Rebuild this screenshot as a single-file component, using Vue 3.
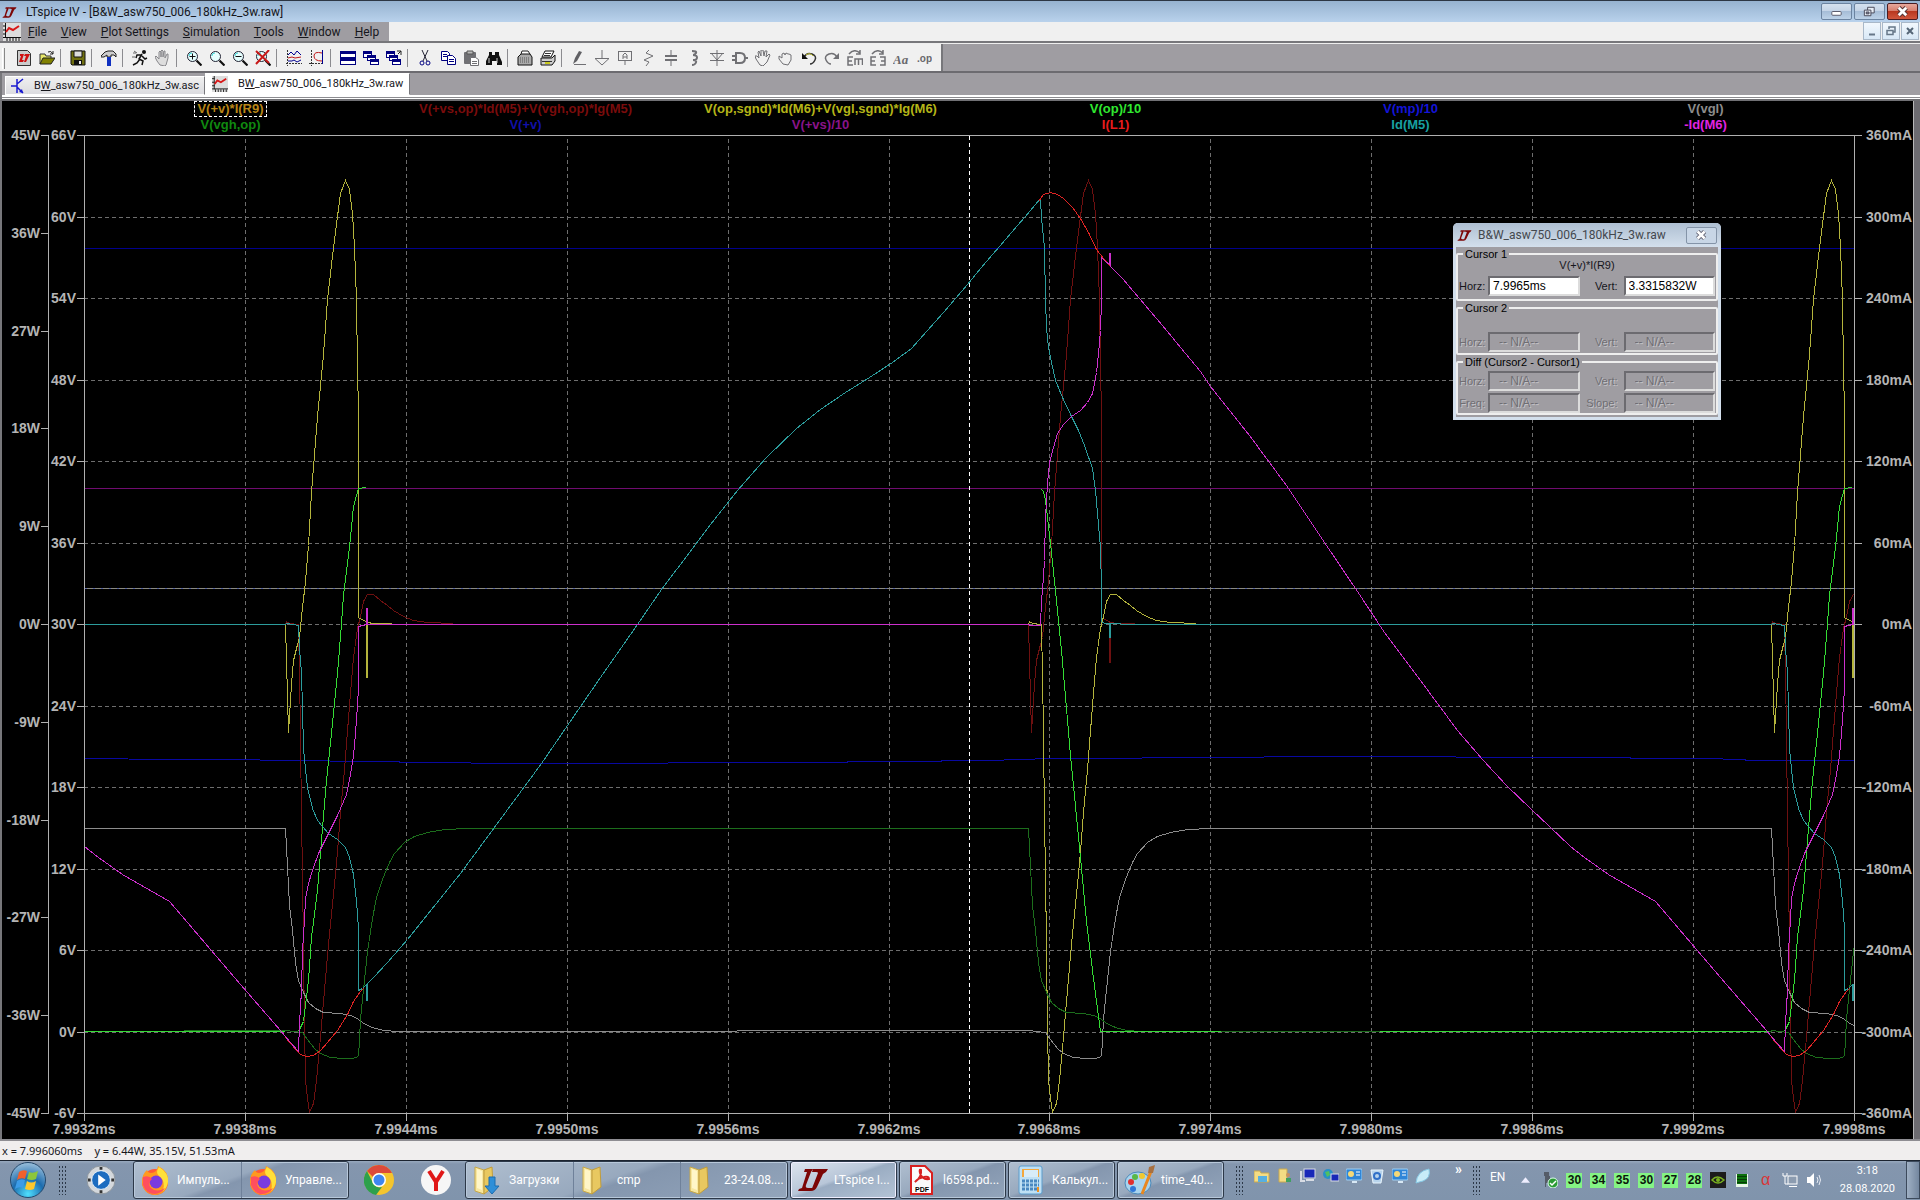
<script setup>
const menus = ['File', 'View', 'Plot Settings', 'Simulation', 'Tools', 'Window', 'Help']

const lens = '<circle cx="6.500" cy="6.500" r="5" fill="#e6ffff" stroke="#223" /><path d="M3 6a3 3 0 0 1 3-3" stroke="#4dd" fill="none"/><path d="M10.500 10.500l5 5" stroke="#111" stroke-width="2.200"/>'
const navy = 'stroke="#000080" fill="none"'
const grey = 'stroke="#707074" fill="none"'
const pane = (x, y, w, h) => `<rect x="${x}.500" y="${y}.500" width="${w}" height="${h}" fill="#fff" stroke="#000080"/><path d="M${x} ${y + 2}h${w + 1}" stroke="#000080" stroke-width="2"/>`
const handShape = 'M5 15l-3-4-2-4 1-1 3 3V2l1-1 1 1v5V1l1-1 1 1v6l1-6 1 0v7l2-4 1 0 0 4-2 7-1 1z'

const toolbar = [
  [
    ['New schematic', '<path d="M1.500.500h10l3 3v12h-13z" fill="#ccc" stroke="#333"/><path d="M4 4h4l-2 6h2l-1 2H3l2-6H4zM9 4h5l-4 8H8l2-6H8z" fill="#d01010"/>'],
    ['Open', '<path d="M1 14V4h5l1 2h5v3" fill="#e8e86a" stroke="#333"/><path d="M1 14l3-6h12l-4 6z" fill="#808000" stroke="#222"/><path d="M9 2q3-2 5 2m0-3v3h-3" stroke="#222" fill="none"/>']
  ],
  [['Save', '<path d="M1 1h14v14H2l-1-1z" fill="#707010" stroke="#111"/><path d="M4 1h8v6H4z" fill="#ddd" stroke="#111"/><path d="M4 10h8v5H4z" fill="#111"/><path d="M9 11h2v3H9z" fill="#eee"/>']],
  [['Control panel', '<path d="M0 6l4-4 3-1h5l3 3v3l-2-2h-3v2H6V5L3 7H0z" fill="#ccc" stroke="#222"/><path d="M6 7h4v9H6z" fill="#1030c0"/>']],
  [
    ['Run', '<circle cx="12" cy="2" r="2" fill="#111"/><path d="M10 4L7 9l4 2-1 4M8 9l-3 4-4 2M9 5L5 5 4 8M10 6l3 3 2-1" stroke="#111" stroke-width="1.500" fill="none"/><path d="M1 3h3M2 1l3 2M0 7h3" stroke="#666"/>'],
    ['Halt', `<path d="${handShape}" fill="#ddd" stroke="#88888c"/>`]
  ],
  [
    ['Zoom in', lens + '<path d="M6.500 3.500v6M3.500 6.500h6" stroke="#111"/>'],
    ['Pan', lens],
    ['Zoom out', lens + '<path d="M3.500 6.500h6" stroke="#111"/>'],
    ['Zoom extents', lens + '<path d="M1 1l13 12M14 0L1 14" stroke="#c81818" stroke-width="2"/>']
  ],
  [
    ['Autorange', '<path d="M1.500 0v16M0 13.500h16" stroke="#333" stroke-dasharray="2 1"/><path d="M2 5l3-3 3 3 3-4 4 4M2 11h4l2-1 3 2 4-2" stroke="#000090" fill="none"/><path d="M2 8l4-1 3 1 6-1" stroke="#c01818" fill="none"/>'],
    ['Pick traces', '<path d="M2.500 0v16M0 13.500h15" stroke="#333" stroke-dasharray="2 1"/><path d="M13.500 0v14" stroke="#000090"/><path d="M13 3Q5 1 5 6t8 5" stroke="#c01818" fill="none"/>']
  ],
  [
    ['Tile', pane(0, 1, 15, 6) + pane(0, 8, 15, 6)],
    ['Cascade', pane(0, 1, 8, 6) + pane(4, 5, 8, 5) + pane(7, 9, 8, 5)],
    ['Close all', pane(0, 1, 8, 6) + pane(3, 5, 8, 5) + pane(6, 9, 8, 5) + '<path d="M11 1h4v4M15 1l-3 3" stroke="#222" fill="none"/>']
  ],
  [
    ['Cut', `<path d="M5 0l5 11M11 0L6 11" stroke="#223"/><g ${navy}><circle cx="5" cy="13" r="2"/><circle cx="11" cy="13" r="2"/></g>`],
    ['Copy', `<g stroke="#000080" fill="#fff"><path d="M1.500 1.500h6l2 2v7h-8z"/><path d="M7.500 5.500h5l3 3v6h-8z"/></g><path d="M3 4.500h4M3 6.500h4M9 9.500h5M9 11.500h5" ${navy}/>`],
    ['Paste', '<rect x="1" y="2" width="12" height="12" rx="1" fill="#707074"/><path d="M4 1h6v3H4z" fill="#bbb" stroke="#555"/><path d="M7.500 7.500h5l3 2v6h-8z" fill="#fff" stroke="#707074"/><path d="M9 11.500h5M9 13.500h5" stroke="#707074"/>'],
    ['Find', '<path d="M3 2h3v3h3V2h4v3l3 7v3h-5v-4H6v4H0v-4l3-6z" fill="#111"/><path d="M3 8v5M11 8v5" stroke="#ccc"/>']
  ],
  [
    ['Print setup', '<path d="M4 4l1-3h6l2 3" fill="#fff" stroke="#222"/><path d="M1 7l3-3h9l2 3v8H1z" fill="#aaa" stroke="#111"/><path d="M3 8h10M3 10h10M3 12h10" stroke="#555" stroke-dasharray="1 1"/>'],
    ['Print', '<path d="M5 1h9l-3 6H2z" fill="#fff" stroke="#111"/><path d="M1 8h11l3-3v6l-3 4H1z" fill="#ccc" stroke="#111"/><path d="M5 3.500h6M4 5.500h6M2 11.500h10" stroke="#333"/><path d="M5 13h5" stroke="#c8c820" stroke-width="2"/>']
  ],
  [
    ['Wire', `<path d="M2 14l2-6 4-7 3 1-5 9z" fill="#606064"/><path d="M3 14.500h12" ${grey}/>`],
    ['Ground', `<path d="M8 0v8M1 8.500h14L8 15z" ${grey}/>`],
    ['Label net', `<rect x="1.500" y="1.500" width="13" height="9" ${grey}/><path d="M6 9V5l2-2 2 2v4M6 7h4M8 11v4" ${grey}/>`],
    ['Resistor', `<path d="M9 0L6 3l7 3-9 4 5 2-3 4" ${grey}/>`],
    ['Capacitor', `<path d="M8 0v6M8 10v6" ${grey}/><path d="M2 6h12M2 10h12" ${grey} stroke-width="2"/>`],
    ['Inductor', `<path d="M6 1q5 0 4 2t-3 2q4 0 4 2.500T7 10q4 0 3 2.500T6 15" ${grey} stroke-width="2"/>`],
    ['Diode', `<path d="M8 0v16M1 3.500h14M2 3l6 7 6-7M1 10.500h14" ${grey}/>`],
    ['Component', `<path d="M4 3h4q5 0 5 5t-5 5H4zM0 6h4M0 10h4M13 8h3" ${grey} stroke-width="2"/>`],
    ['Move', `<path d="M5 15L1 9 0 6l2 0 2 2-1-6 1-1 2 5V0h2l1 6 1-5h2l-1 6 3-3 1 1-3 7-4 4z" ${grey}/>`],
    ['Drag', `<path d="M5 14L1 9V6l3 2V4l2-1 1 2 1-2 2 1 1 0 2 1v5l-3 5z" ${grey}/>`],
    ['Undo', '<path d="M3 7q3-5 8-3t3 6-5 4" stroke="#333" stroke-width="1.500" fill="none"/><path d="M1 3v6h6z" fill="#111"/><path d="M5 5q4-3 7 1" stroke="#c8c830" fill="none"/>'],
    ['Redo', `<path d="M13 7Q10 2 5 4T2 10t5 4" ${grey} stroke-width="1.500"/><path d="M15 3v6H9z" fill="#707074"/>`],
    ['Mirror', `<path d="M2 4q5-6 11-1M13 0v4h-4M6 7H1v8h5M1 11h4M8 15V9h8M11.500 9v6M15.500 9v6" ${grey} stroke-width="1.500"/>`],
    ['Rotate', `<path d="M2 4q5-6 11-1M13 0v4h-4M6 7H1v8h5M1 11h4M10 7h5v8h-5M11 11h4" ${grey} stroke-width="1.500"/>`],
    ['Text', '<text x="0" y="14" font-family="Liberation Serif" font-style="italic" font-weight="bold" font-size="13" fill="#68686c">Aa</text>'],
    ['SPICE directive', '<text x="1" y="12" font-family="Liberation Sans" font-weight="bold" font-size="10" fill="#68686c">.op</text>']
  ]
]

const legend = [
  [['V(+v)*I(R9)', '#b88618', true], ['V(vgh,op)', '#108a10']],
  [['V(+vs,op)*Id(M5)+V(vgh,op)*Ig(M5)', '#7a0c0c'], ['V(+v)', '#1010a8']],
  [['V(op,sgnd)*Id(M6)+V(vgl,sgnd)*Ig(M6)', '#b4b418'], ['V(+vs)/10', '#8a148a']],
  [['V(op)/10', '#30e830'], ['I(L1)', '#e81c1c']],
  [['V(mp)/10', '#1414d8'], ['Id(M5)', '#18a0a0']],
  [['V(vgl)', '#8c8c8c'], ['-Id(M6)', '#e024e0']]
]

const L = 84, R = 1854, T = 135, B = 1113
const row = i => Math.round(T + i * 81.5)
const col = i => Math.round(L + (i * (R - L)) / 11)
const rowsV = Array.from({ length: 13 }, (_, i) => ({ y: row(i), v: `${66 - 6 * i}V`, a: `${360 - 60 * i}mA` }))
const rowsW = Array.from({ length: 11 }, (_, i) => ({ y: Math.round(T + i * 97.8), w: `${45 - 9 * i}W` }))
const cols = Array.from({ length: 12 }, (_, i) => ({ x: col(i), t: `${(7.9932 + 0.0006 * i).toFixed(4)}ms` }))

const PERIOD = 1486, HALF = 743
const shift = (pts, dx) => pts.map(([x, y]) => [x + dx, y])
const line = pts => pts.map(([x, y]) => `${Math.round(x) + 0.5},${Math.round(y) + 0.5}`).join(' ')

const powerHigh = [[285, 624], [286, 660], [288, 732], [291, 684], [293, 660], [297, 644], [299, 637], [301, 616], [305, 581], [308, 545], [311, 492], [317, 416], [323, 354], [327, 299], [333, 247], [337, 216], [340, 193], [345, 180], [349, 189], [352, 213], [354, 247], [356, 299], [357, 368], [358, 413], [358, 617], [361, 619], [366, 621], [366, 677], [367, 677], [367, 622], [373, 623], [391, 623]]
const powerLow = [[285, 624], [286, 621], [289, 623], [298, 624], [300, 730], [301, 823], [302, 869], [303, 951], [304, 1026], [305, 1080], [307, 1098], [309, 1112], [313, 1103], [316, 1080], [319, 1048], [323, 1001], [328, 944], [334, 884], [337, 851], [340, 812], [344, 769], [349, 705], [353, 657], [357, 628], [360, 616], [363, 601], [367, 594], [373, 594], [380, 600], [387, 605], [393, 610], [403, 616], [413, 620], [427, 622], [453, 623]]
const gateFall = [[84, 828], [285, 828], [287, 866], [289, 905], [292, 930], [295, 962], [298, 980], [303, 992], [308, 1002], [315, 1008], [323, 1012], [340, 1013], [350, 1015], [357, 1018], [363, 1023], [372, 1027], [383, 1030], [397, 1031], [450, 1031]]
const gateRise = [[285, 1030], [302, 1032], [307, 1039], [314, 1048], [320, 1053], [330, 1057], [342, 1058], [352, 1058], [358, 1056], [359, 1039], [360, 1019], [363, 989], [367, 951], [372, 918], [376, 897], [382, 879], [389, 862], [394, 853], [404, 842], [414, 836], [427, 832], [444, 829], [467, 828]]
const fetLow = [[84, 846], [98, 857], [122, 874], [169, 901], [240, 984], [280, 1030], [290, 1042], [298, 1051], [299, 1023], [301, 990], [302, 951], [304, 919], [305, 898], [308, 883], [312, 870], [318, 853], [328, 833], [337, 815], [346, 794], [350, 774], [353, 755], [355, 733], [357, 705], [358, 687], [358, 626], [362, 625], [366, 624], [366, 608], [367, 608], [367, 624]]
const fetHigh = [[84, 624], [285, 624], [286, 623], [298, 625], [299, 648], [301, 673], [302, 708], [303, 748], [305, 769], [307, 787], [312, 808], [317, 820], [322, 826], [328, 833], [337, 839], [345, 847], [349, 857], [353, 874], [356, 901], [358, 928], [358, 990], [362, 988], [366, 984], [366, 1000], [367, 1000], [367, 983]]
const coilLow = [[285, 1037], [290, 1043], [300, 1054], [306, 1056], [313, 1055], [320, 1050], [327, 1042], [337, 1030], [347, 1014], [353, 1001], [360, 991], [363, 988]]
const outRise = [[298, 1031], [303, 1021], [308, 980], [311, 937], [317, 890], [321, 840], [326, 780], [332, 723], [337, 673], [341, 623], [343, 595], [349, 547], [353, 506], [358, 488], [366, 487]]

const traces = [
  { c: '#00008c', p: [[84, 248], [1854, 248]] },
  { c: '#8a8a80', p: [[84, 588], [1854, 588]] },
  { c: '#5864a8', p: [[84, 588], [1854, 588]], d: '2 6' },
  { c: '#700c70', p: [[84, 488], [1854, 488]] },
  { c: '#0808a0', p: [[84, 758], [170, 759], [259, 759], [260, 760], [398, 761], [400, 762], [540, 763], [800, 762], [988, 760], [1050, 758], [1104, 758], [1180, 757], [1350, 756], [1560, 757], [1700, 758], [1744, 759], [1746, 760], [1854, 760]] },
  { c: '#6e1010', p: powerLow },
  { c: '#6e1010', p: shift(powerHigh.map(([x, y]) => [x, y === 677 ? 662 : y]), HALF) },
  { c: '#6e1010', p: shift(powerLow, PERIOD) },
  { c: '#b4b43c', p: powerHigh },
  { c: '#b4b43c', p: shift(powerLow, HALF) },
  { c: '#b4b43c', p: shift(powerHigh, PERIOD) },
  { c: '#8c8c8c', p: [...gateFall, ...shift(gateRise, HALF), ...shift(gateFall, PERIOD).slice(1)] },
  { c: '#1c6e1c', p: [[84, 1031], ...gateRise, ...shift(gateFall, HALF).slice(1), [1771, 1031], ...shift(gateRise, PERIOD)] },
  { c: '#34dc34', p: [[84, 1031], [284, 1031]] },
  { c: '#34dc34', p: outRise },
  { c: '#34dc34', p: [[1041, 489], [1043, 491], [1045, 500], [1047, 517], [1050, 543], [1055, 590], [1061, 650], [1066, 708], [1070, 755], [1076, 816], [1080, 857], [1086, 921], [1093, 978], [1100, 1031], [1220, 1031]] },
  { c: '#34dc34', p: [[1379, 1031], [1768, 1031]] },
  { c: '#34dc34', p: shift(outRise, PERIOD) },
  { c: '#e02424', p: coilLow },
  { c: '#e02424', p: shift(coilLow, PERIOD) },
  { c: '#2c9c9c', p: [...fetHigh, [373, 977], [387, 962], [407, 939], [427, 914], [460, 873], [541, 763], [567, 725], [600, 677], [637, 624], [661, 589], [686, 556], [710, 524], [737, 490], [765, 458], [796, 428], [820, 409], [845, 392], [869, 377], [892, 362], [911, 348], [943, 312], [967, 284], [980, 268], [1030, 210], [1040, 198], [1041, 218], [1044, 247], [1045, 300], [1046, 327], [1048, 347], [1051, 362], [1055, 380], [1062, 397], [1071, 416], [1078, 430], [1084, 445], [1092, 468], [1095, 490], [1097, 513], [1100, 547], [1101, 590], [1101, 621], [1104, 623], [1109, 623], [1109, 637], [1110, 637], [1110, 623], [1130, 624], ...shift(fetHigh, PERIOD).slice(1)] },
  { c: '#e02424', p: [[1038, 201], [1043, 194], [1050, 192], [1057, 194], [1063, 198], [1072, 207], [1080, 218], [1088, 232], [1096, 249], [1103, 258], [1110, 266], [1122, 278]] },
  { c: '#cc30cc', p: [...fetLow, [373, 624], [1028, 624], [1030, 625], [1040, 625], [1041, 600], [1042, 590], [1044, 560], [1045, 517], [1047, 483], [1049, 462], [1053, 447], [1057, 433], [1063, 424], [1071, 416], [1080, 410], [1087, 402], [1092, 393], [1094, 383], [1096, 372], [1098, 353], [1100, 330], [1101, 300], [1101, 257], [1105, 261], [1109, 264], [1109, 253], [1110, 253], [1110, 266], [1122, 278], [1139, 298], [1167, 331], [1180, 347], [1200, 371], [1210, 386], [1249, 435], [1286, 485], [1322, 539], [1359, 594], [1384, 632], [1420, 680], [1457, 730], [1482, 759], [1506, 785], [1531, 809], [1549, 826], ...shift(fetLow, PERIOD)] }
]

const ltLogo = '<path d="M8 4h8l-2 3-5 13q-1 3 2 3h5l-2 3H1l1-2 3-1 5-16H7zM16 4h15l-2 3-3 2-6 13q-2 4-6 4l7-18q0-1-2-1h-4z" fill="#7c0606"/>'
const firefox = '<circle cx="15" cy="17" r="13" fill="#ff5a36"/><path d="M18 1q11 5 10 16-1 12-13 13Q3 29 2 17 2 9 7 5q1 3 4 3 6 0 7-7z" fill="#ff9a1e"/><path d="M19 2q10 6 9 15-1 6-5 9 3-10-4-15-4-3 0-9z" fill="#ffe03a"/><circle cx="16" cy="17" r="6.500" fill="#7a3be0"/><path d="M3 20q3 9 12 9 7-1 10-6-8 5-14 0Q7 18 12 14q-3-4-9-2z" fill="#ff4f5e"/>'
const folder = '<path d="M3 2l9 3v24L3 26z" fill="#f7e7a0" stroke="#c8a848"/><path d="M12 5l8-3 1 20-9 7z" fill="#e8c860" stroke="#c09c3c"/><path d="M5 4l5 2v19l-5-2z" fill="#fff6c8"/>'
const tasks = [
  { group: [['Импуль...', firefox], ['Управле...', firefox]] },
  { solo: 'Chrome', icon: '<circle cx="15" cy="15" r="15" fill="#f4c52e"/><path d="M15 0a15 15 0 0 1 13 8H15a7 7 0 0 0-6 4L3 6A15 15 0 0 1 15 0z" fill="#dc4a3a"/><path d="M3 6l6 12a7 7 0 0 0 9 4l-6 8A15 15 0 0 1 3 6z" fill="#2da04c"/><circle cx="15" cy="15" r="7" fill="#fff"/><circle cx="15" cy="15" r="5.500" fill="#3f86f0"/>' },
  { solo: 'Yandex', icon: '<circle cx="15" cy="15" r="15" fill="#f6f6f6"/><path d="M8 6l7 11v9M22 6l-7 11" stroke="#e01818" stroke-width="4" fill="none"/>' },
  { group: [['Загрузки', folder + '<path d="M17 12h6v9h4l-7 8-7-8h4z" fill="#2f8fd8" stroke="#1c6cae"/>'], ['cmp', folder], ['23-24.08....', folder]] },
  { group: [['LTspice I...', ltLogo]], active: true },
  { group: [['l6598.pd...', '<path d="M5 1h14l7 7v21H5z" fill="#fafafa" stroke="#d82020" stroke-width="2"/><path d="M9 17q7-5 6-12-2-1-1 3 2 7 9 6 0-3-5-2-6 1-9 5z" fill="none" stroke="#d82020" stroke-width="2"/><text x="9" y="27" font-family="Liberation Sans" font-size="7" font-weight="bold">PDF</text>']] },
  { group: [['Калькул...', '<rect x="4" y="1" width="23" height="28" rx="2" fill="#bfe0f4" stroke="#5a9ccc"/><rect x="7" y="4" width="17" height="8" fill="#f4a83c"/><rect x="9" y="5" width="14" height="7" fill="#d8ecf8"/><path d="M7 16h17M7 20h17M7 24h17" stroke="#4a88c0" stroke-width="3" stroke-dasharray="3 1"/><path d="M23 22v5" stroke="#f09020" stroke-width="2"/>']] },
  { group: [['time_40...', '<ellipse cx="14" cy="18" rx="13" ry="11" fill="#a8d4ee" stroke="#4a88b8"/><circle cx="7" cy="17" r="3" fill="#e03030"/><circle cx="11" cy="12" r="3" fill="#58b848"/><circle cx="18" cy="11" r="3" fill="#f0c830"/><circle cx="9" cy="24" r="3" fill="#3078d8"/><path d="M28 4L18 29" stroke="#e88820" stroke-width="3"/><path d="M24 8l1-6 6-2-2 8z" fill="#a87040"/>']] }
]

const monitor = '<rect x="4" y="1" width="11" height="9" fill="#1828b8" stroke="#d8dce4"/><path d="M6 12h8M1 3v10h4" stroke="#d8dce4" stroke-width="2" fill="none"/>'
const panel = '<rect x="0" y="1" width="16" height="11" rx="1" fill="#2f86d8" stroke="#9fd0f4"/><circle cx="5" cy="6" r="3" fill="#f4d878"/><path d="M10 4h4M10 7h4" stroke="#fff"/><path d="M6 14h5" stroke="#d8e8f4" stroke-width="2"/>'
const quick = [
  ['Explorer', '<path d="M0 3h6l1 2h8v9H0z" fill="#f4dc84" stroke="#c8a850"/><path d="M4 8h9v6H4z" fill="#58b0e0"/>'],
  ['User files', '<path d="M2 1h8v13H2z" fill="#f4dc84" stroke="#c8a850"/><circle cx="11" cy="7" r="2" fill="#c89060"/><path d="M9 10h5v4H9z" fill="#40a060"/>'],
  ['Computer', monitor],
  ['Network', '<circle cx="5" cy="6" r="5" fill="#2890c8"/><path d="M2 4l4-1 1 4-3 2z" fill="#50c060"/><rect x="8" y="6" width="8" height="7" fill="#1828b8" stroke="#d8dce4"/>'],
  ['Control panel', panel],
  ['Recycle bin', '<path d="M2 2h12l-2 13H4z" fill="#b8d4ec" stroke="#e8f4fc"/><circle cx="8" cy="8" r="3" fill="none" stroke="#3070c8" stroke-width="2"/>'],
  ['Settings', panel],
  ['Notes', '<path d="M1 15Q2 3 14 1q2 9-6 12-4 1-7 2z" fill="#c8ecf8" stroke="#88c8e4"/>']
]
const temps = [30, 34, 35, 30, 27, 28]
const trayIcons = [
  ['NVIDIA', '<rect width="16" height="16" fill="#1c1c1c"/><path d="M2 8q5-6 12 0-6 6-12 0z" fill="none" stroke="#78b020" stroke-width="1.500"/><circle cx="8" cy="8" r="2" fill="#78b020"/>'],
  ['Task Manager', '<rect x="2" y="2" width="12" height="13" fill="#e8f8e8"/><rect x="3" y="2" width="10" height="10" fill="#0c700c"/><path d="M3 4.500h10M3 7.500h10M3 10.500h10" stroke="#063c06"/>'],
  ['Alpha', '<text x="3" y="13" font-family="Liberation Sans" font-size="16" fill="#d83838">α</text>'],
  ['Network', '<rect x="6" y="4" width="9" height="8" fill="#8c9cb0" stroke="#fff"/><path d="M7 14.500h8M3 4v8h3M1 1v3h4V1" stroke="#fff" fill="none"/>'],
  ['Volume', '<path d="M1 5h3l4-4v14l-4-4H1z" fill="#fff"/><path d="M11 5q2 3 0 6M13 3q3 5 0 10" stroke="#e8ecf4" fill="none"/>']
]
</script>

<template>
  <div class="app">
    <header class="title">
      <svg class="logo" viewBox="0 0 32 28" v-html="ltLogo" />
      <span>LTspice IV - [B&amp;W_asw750_006_180kHz_3w.raw]</span>
      <div class="wbtns">
        <button aria-label="Minimize"><svg viewBox="0 0 30 16"><rect x="10" y="8" width="10" height="4" rx="1" fill="#fff" stroke="#556" /></svg></button>
        <button aria-label="Restore"><svg viewBox="0 0 30 16"><g fill="#e8eef6" stroke="#445"><path d="M13 3.500h7v6h-7z" /><path d="M9.500 6.500h7v6h-7z" /><path d="M11.500 8.500h3v2h-3z" fill="#889" /></g></svg></button>
        <button class="close" aria-label="Close"><svg viewBox="0 0 30 16"><path d="M11 4l8 8M19 4l-8 8" stroke="#533" stroke-width="5" /><path d="M11 4l8 8M19 4l-8 8" stroke="#fff" stroke-width="3" /></svg></button>
      </div>
    </header>

    <nav class="menu">
      <div class="items">
        <svg class="doc" viewBox="0 0 18 18"><rect width="18" height="18" fill="#ddd" /><path d="M2.500 0v15M0 14.500h18" stroke="#111" /><path d="M4 15v3M7 15v3M10 15v3M13 15v3M16 15v3M0 3h3M0 7h3M0 11h3" stroke="#111" /><path d="M3 9l3-4 4 2 6-4" stroke="#d81818" stroke-width="2" fill="none" /></svg>
        <button v-for="m in menus" :key="m"><u>{{ m[0] }}</u>{{ m.slice(1) }}</button>
      </div>
      <div class="mdi">
        <button aria-label="Minimize document"><svg viewBox="0 0 16 16"><path d="M5 11.500h6" stroke="#678" stroke-width="2" /></svg></button>
        <button aria-label="Restore document"><svg viewBox="0 0 16 16"><path d="M6 6V4h6v5h-2M4 7.500h6v4H4z" stroke="#678" stroke-width="1.500" fill="none" /></svg></button>
        <button aria-label="Close document"><svg viewBox="0 0 16 16"><path d="M5 5l6 6M11 5l-6 6" stroke="#567" stroke-width="2" /></svg></button>
      </div>
    </nav>

    <div class="toolrow">
      <div class="tools">
        <div v-for="(g, i) in toolbar" :key="i" class="tgroup">
          <button v-for="t in g" :key="t[0]" :aria-label="t[0]"><svg viewBox="0 0 16 16" v-html="t[1]" /></button>
        </div>
      </div>
    </div>

    <div class="tabs">
      <button class="tab"><svg viewBox="0 0 16 16"><path d="M6 1v14M0 8h6M6 6l6-5M6 9l6 6" stroke="#1818d0" stroke-width="1.500" /><path d="M12 15l-4-1 3-3z" fill="#1818d0" /></svg><span>B<u>W</u>_asw750_006_180kHz_3w.asc</span></button>
      <button class="tab on"><svg viewBox="0 0 18 18"><rect width="18" height="18" fill="#ddd" /><path d="M2.500 0v15M0 14.500h18" stroke="#111" /><path d="M4 15v3M7 15v3M10 15v3M13 15v3M16 15v3M0 3h3M0 7h3M0 11h3" stroke="#111" /><path d="M3 9l3-4 4 2 6-4" stroke="#d81818" stroke-width="2" fill="none" /></svg><span>B<u>W</u>_asw750_006_180kHz_3w.raw</span></button>
    </div>

    <main class="plot">
      <div class="legend">
        <div v-for="(c, i) in legend" :key="i">
          <div v-for="t in c" :key="t[0]" class="tr"><span :class="{ sel: t[2] }" :style="{ color: t[1] }">{{ t[0] }}</span></div>
        </div>
      </div>
      <svg class="graph" viewBox="2 133 1912 1006">
        <defs><clipPath id="area"><rect x="84" y="135" width="1771" height="979" /></clipPath></defs>
        <g class="grid">
          <path v-for="r in rowsV.slice(1, 12)" :key="r.y" :d="`M${L} ${r.y}.5H${R}`" />
          <path v-for="c in cols.slice(1, 11)" :key="c.x" :d="`M${c.x}.5 139V${B}`" />
        </g>
        <g clip-path="url(#area)" class="traces">
          <polyline v-for="(t, i) in traces" :key="i" :points="line(t.p)" :stroke="t.c" :stroke-dasharray="t.d" />
        </g>
        <path class="cursor" d="M969.500 136V1113" />
        <g class="axis">
          <path d="M84.500 1121V135.500H1862M48.500 135V1114M1854.500 135V1121M77 1113.500H1862" />
          <path v-for="r in rowsV" :key="r.v" :d="`M77 ${r.y}.5h8M1854 ${r.y}.5h8`" />
          <path v-for="r in rowsW" :key="r.w" :d="`M41 ${r.y}.5h8`" />
          <path v-for="c in cols" :key="c.t" :d="`M${c.x}.5 1113v8`" />
        </g>
        <g class="lab">
          <text v-for="r in rowsW" :key="r.w" x="40" :y="r.y + 5" text-anchor="end">{{ r.w }}</text>
          <text v-for="r in rowsV" :key="r.v" x="76" :y="r.y + 5" text-anchor="end">{{ r.v }}</text>
          <text v-for="r in rowsV" :key="r.a" x="1912" :y="r.y + 5" text-anchor="end">{{ r.a }}</text>
          <text v-for="c in cols" :key="c.t" :x="c.x" y="1134" text-anchor="middle">{{ c.t }}</text>
        </g>
      </svg>

      <section class="dialog">
        <div class="dtitle">
          <svg class="logo" viewBox="0 0 32 28" v-html="ltLogo" />
          <span>B&amp;W_asw750_006_180kHz_3w.raw</span>
          <button aria-label="Close cursor window"><svg viewBox="0 0 30 16"><path d="M11 4l8 8M19 4l-8 8" stroke="#556" stroke-width="5" /><path d="M11 4l8 8M19 4l-8 8" stroke="#fff" stroke-width="3" /></svg></button>
        </div>
        <fieldset>
          <legend>Cursor 1</legend>
          <p>V(+v)*I(R9)</p>
          <div class="f"><label for="h1">Horz:</label><input id="h1" value="7.9965ms"><label for="v1">Vert:</label><input id="v1" value="3.3315832W"></div>
        </fieldset>
        <fieldset>
          <legend>Cursor 2</legend>
          <p></p>
          <div class="f off"><label for="h2">Horz:</label><input id="h2" disabled value="-- N/A--"><label for="v2">Vert:</label><input id="v2" disabled value="-- N/A--"></div>
        </fieldset>
        <fieldset class="diff">
          <legend>Diff (Cursor2 - Cursor1)</legend>
          <div class="f off"><label for="h3">Horz:</label><input id="h3" disabled value="-- N/A--"><label for="v3">Vert:</label><input id="v3" disabled value="-- N/A--"></div>
          <div class="f off"><label for="fr">Freq:</label><input id="fr" disabled value="-- N/A--"><label for="sl">Slope:</label><input id="sl" disabled value="-- N/A--"></div>
        </fieldset>
      </section>
    </main>

    <div class="status"><span>x = 7.996060ms</span><span>y = 6.44W, 35.15V, 51.53mA</span></div>

    <footer class="taskbar">
      <button class="orb" aria-label="Start"><svg viewBox="0 0 38 38"><defs><radialGradient id="orb" cx=".5" cy=".9" r=".9"><stop offset="0" stop-color="#4fe0ff" /><stop offset=".5" stop-color="#1c6cae" /><stop offset="1" stop-color="#9cc0dc" /></radialGradient></defs><circle cx="19" cy="19" r="17.500" fill="url(#orb)" stroke="#24486c" /><path d="M10 11q4-3 8-1l-2 8q-4-2-8 1z" fill="#f0602c" /><path d="M20 11q4 2 9-1l-2 8q-4 2-9 0z" fill="#8cc63c" /><path d="M8 20q4-3 8-1l-2 8q-4-2-8 1z" fill="#3c9ce8" /><path d="M18 20q4 3 9 0l-2 8q-4 2-9 0z" fill="#fcc82c" /></svg></button>
      <i class="grip"></i>
      <button class="solo media" aria-label="Media Player"><svg viewBox="0 0 32 32"><circle cx="16" cy="16" r="15" fill="#d4d8dc" stroke="#8c949c" /><circle cx="16" cy="16" r="10" fill="#1c6cc0" stroke="#e8f0f8" /><path d="M13 10l8 6-8 6z" fill="#fff" /><path d="M16 2v3M16 27v3M2 16h3M27 16h3" stroke="#333" stroke-width="3" /></svg></button>
      <template v-for="(t, i) in tasks" :key="i">
        <button v-if="t.solo" class="solo" :aria-label="t.solo"><svg viewBox="0 0 30 30" v-html="t.icon" /></button>
        <div v-else class="tg" :class="{ active: t.active, single: t.group.length === 1 }">
          <button v-for="b in t.group" :key="b[0]"><svg viewBox="0 0 32 30" v-html="b[1]" /><span>{{ b[0] }}</span></button>
        </div>
      </template>
      <i class="grip g2"></i>
      <div class="quick"><button v-for="q in quick" :key="q[0]" :aria-label="q[0]"><svg viewBox="0 0 16 16" v-html="q[1]" /></button></div>
      <button class="more">»</button>
      <i class="grip g3"></i>
      <span class="lang">EN</span>
      <button class="up" aria-label="Show hidden icons"><svg viewBox="0 0 8 5"><path d="M4 0l4 5H0z" fill="#eef" /></svg></button>
      <div class="tray">
        <svg viewBox="0 0 16 16"><path d="M2 0h5v4h1v7H4v4H3V4H2z" fill="#555c68" /><circle cx="11" cy="11" r="5" fill="#2c9c34" stroke="#dfe" /><path d="M8 11l2 2 4-4" stroke="#fff" fill="none" stroke-width="1.500" /></svg>
        <b v-for="(n, i) in temps" :key="i">{{ n }}</b>
        <svg v-for="t in trayIcons" :key="t[0]" :aria-label="t[0]" viewBox="0 0 16 16" v-html="t[1]" />
      </div>
      <div class="clock"><span>3:18</span><span>28.08.2020</span></div>
      <button class="desk" aria-label="Show desktop"></button>
    </footer>
  </div>
</template>

<style>
body { background: #9f9da2; }
</style>

<style scoped>
.app { font: 12px/16px Roboto, "Open Sans", sans-serif; color: #16161c; background: #9f9da2; min-width: 1200px; overflow: hidden; }
.app *, .app *::before { box-sizing: border-box; }
button { font: inherit; color: inherit; background: none; border: 0; padding: 0; margin: 0; display: flex; align-items: center; justify-content: center; }
svg { display: block; flex: none; }
.title { height: 22px; border-top: 1px solid #2c3644; background: linear-gradient(#96b2d0, #b9d2ec); display: flex; align-items: center; padding: 0 2px; }
.logo { width: 15px; height: 14px; margin-right: 9px; }
.wbtns { margin-left: auto; display: flex; gap: 2px; }
.wbtns button { width: 31px; height: 17px; border: 1px solid #6b83a0; border-radius: 2px; background: linear-gradient(#d5e1ef, #c3d3e6 50%, #a6bdd7 50%, #bdd2e8); margin-bottom: 1px; }
.wbtns svg { width: 29px; height: 15px; }
.wbtns .close { border-color: #4a1c20; background: linear-gradient(#e7a89c, #d67a68 50%, #b93820 50%, #d0563c); }
.menu { height: 21px; background: #f0f0f0; border-bottom: 2px solid #77777b; display: flex; align-items: stretch; }
.items { display: flex; background: #9f9da2; padding-right: 3px; }
.items .doc { width: 18px; height: 18px; margin: 1px 0 0 3px; }
.items button { padding: 0 7px; }
.mdi { margin-left: auto; display: flex; gap: 1px; padding-right: 1px; }
.mdi button { width: 18px; height: 18px; border: 1px solid #a9b8c8; background: linear-gradient(#f2f8fd, #d8e8f6); }
.mdi svg { width: 16px; height: 16px; }
.toolrow { height: 30px; border-top: 1px solid #eee; border-bottom: 2px solid #6c6b70; }
.tools { width: 943px; height: 27px; background: #f0f0f0; border-right: 2px solid #77777b; display: flex; align-items: center; padding-left: 12px; position: relative; }
.tools::before { content: ""; position: absolute; left: 2px; top: 4px; width: 3px; height: 21px; border-right: 1px solid #888; border-left: 1px solid #fff; }
.tgroup { display: flex; }
.tgroup + .tgroup { margin-left: 8px; position: relative; }
.tgroup + .tgroup::before { content: ""; position: absolute; left: -6px; top: -1px; height: 18px; border-left: 1px solid #8c8c90; }
.tgroup button { width: 23px; }
.tgroup svg { width: 16px; height: 16px; }
.tabs { height: 28px; background: #9f9da2; border-bottom: 2px solid #707074; display: flex; padding: 1px 0 4px 3px; align-items: flex-end; border-left: 2px solid #77777b; box-shadow: inset 0 -1px #fff, inset 0 -2px #8c8c90, inset 0 -4px #fff; white-space: nowrap; font-size: 11px; }
.tab { height: 19px; width: 200px; background: linear-gradient(#f0f0f0, #dcdce0); border: 1px solid #fff; border-right-color: #77777b; justify-content: flex-start; padding-left: 5px; gap: 7px; }
.tab svg { width: 16px; height: 16px; }
.tab.on { height: 22px; width: 205px; background: #fff; padding: 0 0 0 6px; gap: 10px; }
.plot { position: relative; background: #000; border-left: 2px solid #77777b; border-right: 6px solid #6c6b70; box-shadow: inset -1px 0 #b8b8b8; }
.legend { display: grid; grid-template-columns: repeat(6, 1fr); padding: 0 61px 0 81px; font: bold 13px/16px "Liberation Sans", sans-serif; }
.tr { text-align: center; height: 16px; white-space: nowrap; }
.sel { display: inline-block; height: 16px; outline: 1px dashed #fff; outline-offset: -1px; padding: 0 3px; }
.graph { width: 100%; overflow: visible; shape-rendering: crispEdges; }
.grid { stroke: #6e6e6e; stroke-dasharray: 4 3; }
.traces { fill: none; }
.cursor { stroke: #fff; stroke-dasharray: 4 3; }
.axis { stroke: #b0b0b0; fill: none; }
.lab { font: bold 14px "Liberation Sans", sans-serif; fill: #b4b4b4; }
.dialog { position: absolute; right: 193px; top: 122px; width: 268px; background: #9f9da2; border: 3px solid #d3dfec; border-width: 0 3px 3px; border-radius: 5px 5px 0 0; font: 11px/14px "Liberation Sans", sans-serif; padding-bottom: 2px; }
.dtitle { height: 24px; margin: 0 -3px; padding: 0 4px; border-radius: 5px 5px 0 0; background: linear-gradient(#aebfd2, #d3dfec); display: flex; align-items: center; font: 12px/16px Roboto, sans-serif; color: #44484e; }
.dtitle button { margin-left: auto; width: 31px; height: 17px; border: 1px solid #8494a8; border-radius: 2px; background: #c8d6e6; }
.dtitle svg { height: 14px; }
.dtitle .logo { margin-right: 6px; }
fieldset { border: 2px solid #eee; border-radius: 2px; margin: 0; padding: 0 1px; height: 54px; min-width: 0; }
fieldset legend { display: block; line-height: 14px; height: 14px; padding: 0 2px; margin-left: 4px; color: #000; }
fieldset p { margin: -2px 0 0; height: 17px; text-align: center; line-height: 12px; }
fieldset p:empty { height: 19px; }
.f { display: flex; align-items: center; }
.f label { width: 29px; text-align: right; padding-right: 3px; }
.f label:nth-of-type(2) { width: 44px; padding-right: 6px; }
.f input { font: inherit; font-size: 12px; flex: 1; min-width: 0; height: 20px; border: 2px solid; border-color: #6c6b70 #dcdcdc #dcdcdc #6c6b70; background: #fff; color: #000; padding: 0 0 0 3px; }
.off label, .off input { color: #6f6e73; text-shadow: 1px 1px #c4c3c8; }
.off input { background: #9f9da2; padding-left: 9px; }
.diff { height: 60px; }
.diff legend + .f { margin-top: 2px; }
.diff .f + .f { margin-top: 2px; }
.status { height: 21px; border-top: 2px solid #8e8d92; background: #f0eeee; display: flex; gap: 12px; align-items: center; padding-left: 2px; font: 11px/16px "Noto Sans", sans-serif; }
.taskbar { height: 40px; background: linear-gradient(#1c2430 1px, #98a9be 1px, #8496ae 4px, #8094ac); display: flex; align-items: center; color: #fff; }
.orb { margin-left: 8px; width: 40px; }
.orb svg { width: 38px; height: 38px; }
.grip { width: 8px; height: 30px; margin-left: 10px; background: radial-gradient(circle, #2c3848 1px, transparent 1px) 0 0 / 3px 4px; }
.solo { width: 57px; height: 38px; }
.solo svg { width: 30px; height: 32px; }
.media { width: 66px; padding: 0 1px 0 4px; }
.tg { display: flex; height: 38px; border: 1px solid #2c3848; border-radius: 3px; box-shadow: inset 0 0 0 1px #b8c8da; background: linear-gradient(160deg, #b0bfd0, #98a9be 45%, #8496ae 50%, #93a5bb); margin: 0 1px; }
.tg.active { background: linear-gradient(160deg, #dce4ee, #b8c6d8 45%, #9aacc2 50%, #b4c4d6); box-shadow: inset 0 0 0 1px #eef; }
.tg button { width: 107px; justify-content: flex-start; padding-left: 6px; gap: 5px; }
.tg.single button { width: 105px; }
.tg button + button { border-left: 1px solid #6f819a; }
.tg svg { width: 32px; height: 30px; }
.tg span { white-space: nowrap; }
.g2 { margin-right: 11px; }
.quick { display: flex; gap: 7px; padding-bottom: 9px; }
.quick svg { width: 16px; height: 16px; }
.more { margin-left: 24px; padding-bottom: 22px; font-weight: bold; font-size: 14px; }
.lang { margin-left: 10px; padding-bottom: 6px; }
.up { margin-left: 16px; }
.up svg { width: 9px; height: 6px; }
.tray { display: flex; gap: 8px; margin-left: 12px; align-items: center; }
.tray svg { width: 16px; height: 16px; }
.tray b { width: 16px; height: 15px; background: #84f484; color: #0c180c; font: bold 12px/15px "Liberation Sans", sans-serif; text-align: center; }
.clock { margin-left: auto; display: flex; flex-direction: column; text-align: center; font-size: 11px; line-height: 18px; padding-right: 11px; }
.desk { width: 14px; height: 38px; border: 1px solid #3c4a5c; background: linear-gradient(90deg, #9fb0c4, #74879f); }
</style>
